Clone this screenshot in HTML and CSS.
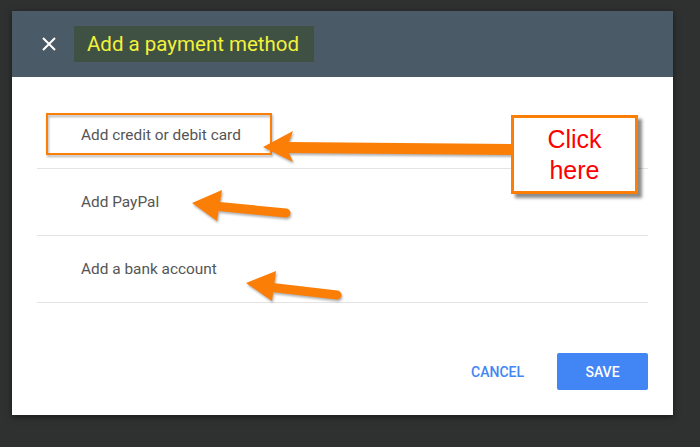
FILE: index.html
```html
<!DOCTYPE html>
<html lang="en">

<head>
	<meta charset="UTF-8">
	<meta name="viewport" content="width=device-width, initial-scale=1.0">
	<title>Add a payment method</title>
	<link rel="stylesheet" href="styles.css">
</head>

<body>
	<div class="dialog">
		<header class="dialog-head">
			<svg class="close" width="14" height="14" viewBox="0 0 14 14">
				<path d="M1 1 L13 13 M13 1 L1 13" stroke="#fff" stroke-width="2" />
			</svg>
			<h1 class="title">Add a payment method</h1>
		</header>
		<ul class="methods">
			<li>Add credit or debit card</li>
			<li>Add PayPal</li>
			<li>Add a bank account</li>
		</ul>
		<footer class="actions">
			<button type="button" class="btn-text">CANCEL</button>
			<button type="button" class="btn-primary">SAVE</button>
		</footer>
	</div>

	<!-- annotations drawn over the screenshot -->
	<svg class="marks" width="700" height="447" viewBox="0 0 700 447">
		<rect x="47" y="114" width="224" height="40" fill="none" stroke="#fb7e06" stroke-width="2" />
		<polygon fill="#fb7e06" points="263,147 293,131 289,142 512,144 512,155 289,153 293,162" />
		<line x1="214" y1="206" x2="286" y2="213" stroke="#fb7e06" stroke-width="9" stroke-linecap="round" />
		<polygon fill="#fb7e06" points="192,203 222,190 217,221" />
		<line x1="268" y1="287" x2="337" y2="295" stroke="#fb7e06" stroke-width="9" stroke-linecap="round" />
		<polygon fill="#fb7e06" points="246,283 276,271 272,301" />
	</svg>
	<div class="callout">Click<br>here</div>
</body>

</html>
```
FILE: styles.css
```css
html {
	font-size: 16px;
}

body {
	margin: 0;
	height: 447px;
	background: #2f3130;
	font-family: Roboto, "Liberation Sans", sans-serif;
	overflow: hidden;
	position: relative;
}

.dialog {
	margin: 11px 0 0 12px;
	width: 661px;
	background: #fff;
	padding-bottom: 25px;
	box-shadow: 0 2px 6px rgba(0, 0, 0, 0.5);
}

.dialog-head {
	display: flex;
	align-items: center;
	height: 66px;
	padding-left: 30px;
	background: #4a5b67;
}

.close {
	margin-right: 18px;
}

.title {
	margin: 0;
	padding: 0 15px 0 13px;
	height: 36px;
	line-height: 36px;
	background: #3f5142;
	color: #f2f23a;
	font-size: 20.5px;
	font-weight: 400;
}

.methods {
	list-style: none;
	margin: 25px 25px 0;
	padding: 0;
}

.methods li {
	display: flex;
	align-items: center;
	height: 66px;
	padding-left: 44px;
	border-bottom: 1px solid #e4e4e4;
	color: #555;
	font-size: 15.4px;
}

.actions {
	display: flex;
	justify-content: flex-end;
	gap: 17px;
	margin-top: 50px;
	padding: 0 25px;
}

.actions button {
	height: 37px;
	border: none;
	font-family: Roboto, "Liberation Sans", sans-serif;
	font-size: 14px;
	font-weight: 500;
	cursor: pointer;
}

.btn-text {
	padding: 0 16px;
	background: none;
	color: #4285f4;
}

.btn-primary {
	width: 91px;
	border-radius: 2px;
	background: #4285f4;
	color: #fff;
}

.marks {
	position: absolute;
	left: 0;
	top: 0;
	filter: drop-shadow(1px 2px 1px rgba(0, 0, 0, 0.3));
}

.callout {
	position: absolute;
	left: 511px;
	top: 115px;
	width: 121px;
	height: 73px;
	border: 3px solid #fb7e06;
	background: #fff;
	box-shadow: 4px 4px 3px rgba(0, 0, 0, 0.45);
	display: flex;
	align-items: center;
	justify-content: center;
	text-align: center;
	color: #ff0000;
	font-family: "Liberation Sans", Arial, sans-serif;
	font-size: 25px;
	line-height: 31px;
}
```
